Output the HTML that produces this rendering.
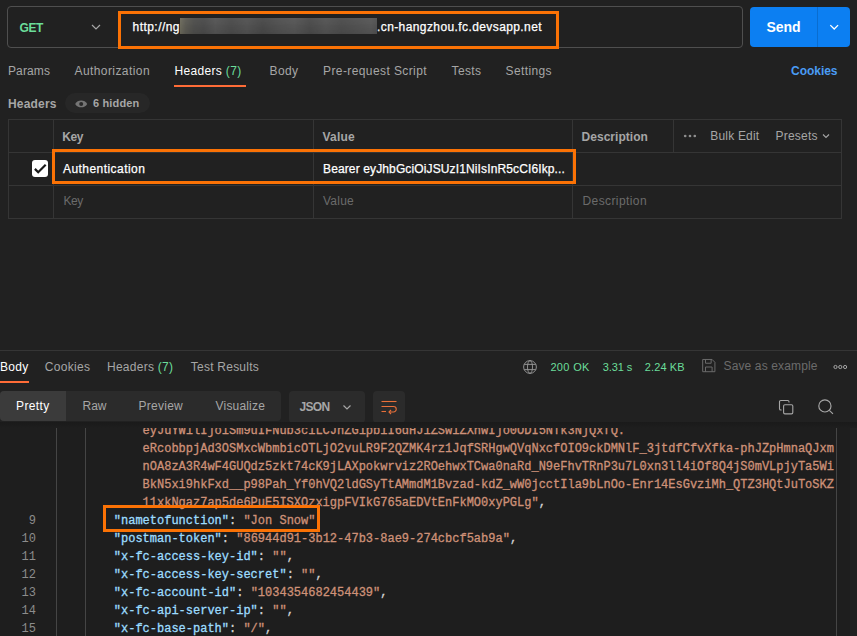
<!DOCTYPE html>
<html lang="en"><head><meta charset="utf-8"><title>Postman</title>
<style>
html,body{margin:0;padding:0}
body{width:857px;height:636px;overflow:hidden;background:#212121;position:relative;font-family:"Liberation Sans",sans-serif;}
.a{position:absolute;box-sizing:border-box}
.t{position:absolute;white-space:nowrap;line-height:20px;height:20px;font-family:"Liberation Sans",sans-serif}
svg{position:absolute;overflow:visible}
#urlbar{left:7px;top:6.3px;width:736px;height:41.5px;border:1px solid #4f4f4f;border-radius:4px}
#blur{left:180px;top:17.5px;width:196.5px;height:16.5px;background:linear-gradient(180deg,rgba(255,255,255,.04),rgba(0,0,0,.08)),linear-gradient(90deg,#6d6b5c 0,#5a5952 3%,#4e4e4c 7%,#4a4a4a 12%,#545454 18%,#4b4b4b 26%,#525252 34%,#484848 42%,#505050 50%,#555 58%,#4a4a4a 66%,#535353 74%,#4c4c4c 82%,#515151 90%,#565656 97%,#505050 100%);filter:blur(.5px)}
#sendbtn{left:750px;top:6.7px;width:100px;height:40.3px;background:#0c7ff2;border-radius:4px}
#senddiv{left:817px;top:6.7px;width:1px;height:40.3px;background:#0a6dd0}
#tabul{left:174px;top:85px;width:72px;height:2px;background:#ff6c37}
#pill{left:65px;top:93px;width:85px;height:20px;border-radius:10px;background:#272727}
#table{left:7.5px;top:119px;width:834.5px;height:99.5px;border:1px solid #353535}
.hline{left:8px;width:833px;height:1px;background:#353535}
.vline{top:119px;width:1px;height:99px;background:#353535}
#chk{left:31.6px;top:160.2px;width:16.6px;height:16.6px;background:#fff;border-radius:3px}
#rdiv{left:0;top:350px;width:857px;height:1px;background:#353535}
#bodyul{left:0;top:381px;width:29px;height:2px;background:#ff6c37}
#grp{left:0;top:391px;width:280.5px;height:29.5px;background:#2b2b2b;border-radius:4px}
#grpsel{left:0;top:391px;width:66px;height:29.5px;background:#3b3b3b;border-radius:4px 0 0 4px}
#jsonbtn{left:288.7px;top:391px;width:76.5px;height:31.5px;background:#2b2b2b;border-radius:4px}
#wrapbtn{left:373px;top:391px;width:32px;height:31.5px;background:#2b2b2b;border-radius:4px}
#code{position:absolute;left:0;top:427.5px;width:850px;height:208.5px;overflow:hidden;background:#1e1e1e}
#code .cl,#code .ln{position:absolute;font-family:"Liberation Mono",monospace;font-size:12px;line-height:18px;height:18px;white-space:pre;margin-top:-427.5px}
#code .ln{left:0;width:36px;text-align:right;color:#8c8c8c}
#code .cl{-webkit-text-stroke:0.3px}
.guide{position:absolute;top:0;width:1px;height:209px;background:#454545}
#shadow{left:0;top:422px;width:857px;height:6px;background:linear-gradient(#1a1a1a,#1e1e1e)}
.hl{position:absolute;box-sizing:border-box;border:3.4px solid #fb7205}
#hl1{left:117.9px;top:10.9px;width:441.3px;height:38.1px}
#hl2{left:51.9px;top:148.8px;width:524.4px;height:35.1px}
#hl3{left:102.9px;top:504.8px;width:217.1px;height:27.2px}
#authn,#bearer,#url1,#url2{-webkit-text-stroke:0.25px}

#get{left:19.6px;top:17.5px;color:#6bdd9a;font-weight:700;font-size:12px;letter-spacing:-0.491px}
#url1{left:132.5px;top:17px;color:#ffffff;font-weight:400;font-size:12px;letter-spacing:0.458px}
#url2{left:377px;top:17px;color:#ffffff;font-weight:400;font-size:12px;letter-spacing:0.403px}
#send{left:766.5px;top:16.8px;color:#ffffff;font-weight:700;font-size:14px;letter-spacing:-0.059px}
#params{left:8px;top:60.5px;color:#a6a6a6;font-weight:400;font-size:12px;letter-spacing:0.109px}
#auth{left:74.5px;top:60.5px;color:#a6a6a6;font-weight:400;font-size:12px;letter-spacing:0.419px}
#hdrs{left:174.5px;top:60.5px;color:#ffffff;font-weight:400;font-size:12px;letter-spacing:0.330px}
#body{left:269.5px;top:60.5px;color:#a6a6a6;font-weight:400;font-size:12px;letter-spacing:0.410px}
#prs{left:323px;top:60.5px;color:#a6a6a6;font-weight:400;font-size:12px;letter-spacing:0.405px}
#tests{left:451.5px;top:60.5px;color:#a6a6a6;font-weight:400;font-size:12px;letter-spacing:0.397px}
#settings{left:505.5px;top:60.5px;color:#a6a6a6;font-weight:400;font-size:12px;letter-spacing:0.393px}
#cookies{left:791px;top:60.5px;color:#4a9cf5;font-weight:700;font-size:12px;letter-spacing:-0.027px}
#hlabel{left:8px;top:93.7px;color:#a6a6a6;font-weight:700;font-size:12px;letter-spacing:0.189px}
#hidden{left:93px;top:93px;color:#a6a6a6;font-weight:700;font-size:11px;letter-spacing:0.158px}
#thkey{left:62.3px;top:126.5px;color:#a6a6a6;font-weight:700;font-size:12px;letter-spacing:-0.439px}
#thval{left:322.4px;top:126.5px;color:#a6a6a6;font-weight:700;font-size:12px;letter-spacing:0.248px}
#thdesc{left:581.5px;top:126.5px;color:#a6a6a6;font-weight:700;font-size:12px;letter-spacing:0.044px}
#bulk{left:710.3px;top:125.5px;color:#a6a6a6;font-weight:400;font-size:12px;letter-spacing:0.182px}
#presets{left:775.4px;top:125.5px;color:#a6a6a6;font-weight:400;font-size:12px;letter-spacing:0.245px}
#authn{left:63px;top:158.5px;color:#ffffff;font-weight:400;font-size:12px;letter-spacing:0.446px}
#bearer{left:323px;top:158.5px;color:#ffffff;font-weight:400;font-size:12px;letter-spacing:0.128px}
#pkey{left:63.4px;top:190.5px;color:#6b6b6b;font-weight:400;font-size:12px;letter-spacing:-0.362px}
#pval{left:323px;top:190.5px;color:#6b6b6b;font-weight:400;font-size:12px;letter-spacing:0.237px}
#pdesc{left:582.5px;top:190.5px;color:#6b6b6b;font-weight:400;font-size:12px;letter-spacing:0.406px}
#rbody{left:0px;top:356.5px;color:#ffffff;font-weight:400;font-size:12px;letter-spacing:0.335px}
#rcook{left:44.8px;top:356.5px;color:#a6a6a6;font-weight:400;font-size:12px;letter-spacing:0.306px}
#rhdr{left:107px;top:356.5px;color:#a6a6a6;font-weight:400;font-size:12px;letter-spacing:0.266px}
#rtest{left:190.8px;top:356.5px;color:#a6a6a6;font-weight:400;font-size:12px;letter-spacing:0.237px}
#s200{left:550.4px;top:357px;color:#6bdd9a;font-weight:400;font-size:11px;letter-spacing:0.348px}
#stime{left:602.7px;top:357px;color:#6bdd9a;font-weight:400;font-size:11px;letter-spacing:-0.061px}
#ssize{left:644.7px;top:357px;color:#6bdd9a;font-weight:400;font-size:11px;letter-spacing:0.137px}
#save{left:723.5px;top:356px;color:#6b6b6b;font-weight:400;font-size:12px;letter-spacing:0.136px}
#pretty{left:16px;top:395.5px;color:#ffffff;font-weight:400;font-size:12px;letter-spacing:0.393px}
#raw{left:82.6px;top:395.5px;color:#a6a6a6;font-weight:400;font-size:12px;letter-spacing:-0.072px}
#preview{left:138.6px;top:395.5px;color:#a6a6a6;font-weight:400;font-size:12px;letter-spacing:0.245px}
#visual{left:215.6px;top:395.5px;color:#a6a6a6;font-weight:400;font-size:12px;letter-spacing:0.176px}
#json{left:299.4px;top:397px;color:#a6a6a6;font-weight:700;font-size:12px;letter-spacing:-0.647px}
</style></head>
<body>
<div class="a" id="urlbar"></div>
<svg style="left:90px;top:22px" width="12" height="10" viewBox="0 0 12 10"><path d="M2 3 L6 7 L10 3" fill="none" stroke="#a6a6a6" stroke-width="1.2"/></svg>
<div class="a" id="blur"></div>
<div class="a" id="sendbtn"></div><div class="a" id="senddiv"></div>
<svg style="left:828px;top:22px" width="12" height="10" viewBox="0 0 12 10"><path d="M2.3 3.1 L6.2 7 L10.1 3.1" fill="none" stroke="#ffffff" stroke-width="1.3"/></svg>
<div class="a" id="tabul"></div>
<div class="a" id="pill"></div>
<svg style="left:74.8px;top:99.6px" width="12.4" height="7.8" viewBox="0 0 12.4 7.8"><path d="M0.2 3.9 C2.4 -0.6 10 -0.6 12.2 3.9 C10 8.4 2.4 8.4 0.2 3.9 Z" fill="#757575"/><circle cx="6.2" cy="3.9" r="2" fill="#2a2a2a"/></svg>
<div class="a" id="table"></div>
<div class="a hline" style="top:152px"></div><div class="a hline" style="top:185px"></div>
<div class="a vline" style="left:53px"></div><div class="a vline" style="left:313px"></div><div class="a vline" style="left:572px"></div>
<div class="a vline" style="left:673px;height:33px"></div>
<svg style="left:683px;top:133px" width="14" height="6" viewBox="0 0 14 6"><circle cx="2.2" cy="3" r="1.35" fill="#8e8e8e"/><circle cx="7" cy="3" r="1.35" fill="#8e8e8e"/><circle cx="11.8" cy="3" r="1.35" fill="#8e8e8e"/></svg>
<svg style="left:820px;top:131px" width="12" height="10" viewBox="0 0 12 10"><path d="M3 3.5 L6 6.5 L9 3.5" fill="none" stroke="#a6a6a6" stroke-width="1.1"/></svg>
<div class="a" id="chk"></div>
<svg style="left:31.6px;top:160.2px" width="16.6" height="16.6" viewBox="0 0 16.6 16.6"><path d="M2.9 8.9 L6.2 12.2 L13.7 4.7" fill="none" stroke="#1a1a1a" stroke-width="2.2"/></svg>
<div class="a" id="rdiv"></div>
<div class="a" id="bodyul"></div>
<svg style="left:523px;top:360px" width="14" height="14" viewBox="0 0 14 14"><g fill="none" stroke="#9a9a9a" stroke-width="0.9"><circle cx="7" cy="7" r="6.4"/><ellipse cx="7" cy="7" rx="2.5" ry="6.4"/><path d="M1.2 4.4 H12.8 M1.2 9.6 H12.8"/></g></svg>
<svg style="left:702.2px;top:359.4px" width="13.6" height="13.2" viewBox="0 0 14 14"><g fill="none" stroke="#6b6b6b" stroke-width="1.05"><path d="M0.5 0.5 H10.5 L13.5 3.5 V13.5 H0.5 Z"/><path d="M3.5 0.5 V4.5 H9.5 V0.5"/><path d="M3.5 13.5 V8.5 H10.5 V13.5"/></g></svg>
<svg style="left:833px;top:363.8px" width="15" height="6" viewBox="0 0 15 6"><g fill="none" stroke="#a6a6a6" stroke-width="1"><circle cx="2.5" cy="3" r="1.6"/><circle cx="7.3" cy="3" r="1.6"/><circle cx="12.1" cy="3" r="1.6"/></g></svg>
<div class="a" id="grp"></div><div class="a" id="grpsel"></div>
<div class="a" id="jsonbtn"></div><div class="a" id="wrapbtn"></div>
<svg style="left:341px;top:402px" width="12" height="10" viewBox="0 0 12 10"><path d="M2.5 3.5 L6 7 L9.5 3.5" fill="none" stroke="#a6a6a6" stroke-width="1.2"/></svg>
<svg style="left:381px;top:400px" width="16" height="14" viewBox="0 0 16 14"><g fill="none" stroke="#e8703a" stroke-width="1.1"><path d="M0.5 1.5 H15.5"/><path d="M0.5 6.5 H12.5 A2.7 2.7 0 0 1 12.5 12 H8"/><path d="M10 10 L8 12 L10 14"/><path d="M0.5 11.5 H5"/></g></svg>
<svg style="left:779px;top:399.6px" width="15" height="15" viewBox="0 0 15 15"><g fill="none" stroke="#a6a6a6" stroke-width="1.1"><rect x="4.6" y="4.7" width="9.2" height="9.2" rx="1.3"/><path d="M2.6 10 H1.8 A1.3 1.3 0 0 1 0.5 8.7 V1.8 A1.3 1.3 0 0 1 1.8 0.5 H8.7 A1.3 1.3 0 0 1 10 1.8 V2.6"/></g></svg>
<svg style="left:818.2px;top:399.2px" width="16" height="16" viewBox="0 0 16 16"><g fill="none" stroke="#a6a6a6" stroke-width="1.15"><circle cx="6.9" cy="6.9" r="6.1"/><path d="M11.3 11.3 L15 14.8"/></g></svg>
<div class="a" id="shadow"></div>

<div id="code"><div class="guide" style="left:56px"></div><div class="guide" style="left:85px"></div><div class="guide" style="left:836px"></div>
<span class="cl" style="top:422.0px;left:142.6px"><span style="color:#ce9178">eyJuYW1lIjoiSm9uIFNub3ciLCJhZG1pbiI6dHJ1ZSwiZXhwIjo0ODI5NTk3NjQxfQ.</span></span>
<span class="cl" style="top:440.0px;left:142.6px"><span style="color:#ce9178">eRcobbpjAd3OSMxcWbmbicOTLjO2vuLR9F2QZMK4rz1JqfSRHgwQVqNxcfOIO9ckDMNlF_3jtdfCfvXfka-phJZpHmnaQJxm</span></span>
<span class="cl" style="top:458.0px;left:142.6px"><span style="color:#ce9178">nOA8zA3R4wF4GUQdz5zkt74cK9jLAXpokwrviz2ROehwxTCwa0naRd_N9eFhvTRnP3u7L0xn3ll4iOf8Q4jS0mVLpjyTa5Wi</span></span>
<span class="cl" style="top:476.0px;left:142.6px"><span style="color:#ce9178">BkN5xi9hkFxd__p98Pah_Yf0hVQ2ldGSyTtAMmdM1Bvzad-kdZ_wW0jcctIla9bLnOo-Enr14EsGvziMh_QTZ3HQtJuToSKZ</span></span>
<span class="cl" style="top:494.0px;left:142.6px"><span style="color:#ce9178">11xkNgaz7ap5de6PuE5ISXOzxigpFVIkG765aEDVtEnFkMO0xyPGLg"</span><span style="color:#d4d4d4">,</span></span>
<span class="ln" style="top:512.0px">9</span>
<span class="cl" style="top:512.0px;left:113.8px"><span style="color:#9cdcfe">"nametofunction"</span><span style="color:#d4d4d4">: </span><span style="color:#ce9178">"Jon Snow"</span></span>
<span class="ln" style="top:530.0px">10</span>
<span class="cl" style="top:530.0px;left:113.8px"><span style="color:#9cdcfe">"postman-token"</span><span style="color:#d4d4d4">: </span><span style="color:#ce9178">"86944d91-3b12-47b3-8ae9-274cbcf5ab9a"</span><span style="color:#d4d4d4">,</span></span>
<span class="ln" style="top:548.0px">11</span>
<span class="cl" style="top:548.0px;left:113.8px"><span style="color:#9cdcfe">"x-fc-access-key-id"</span><span style="color:#d4d4d4">: </span><span style="color:#ce9178">""</span><span style="color:#d4d4d4">,</span></span>
<span class="ln" style="top:566.0px">12</span>
<span class="cl" style="top:566.0px;left:113.8px"><span style="color:#9cdcfe">"x-fc-access-key-secret"</span><span style="color:#d4d4d4">: </span><span style="color:#ce9178">""</span><span style="color:#d4d4d4">,</span></span>
<span class="ln" style="top:584.0px">13</span>
<span class="cl" style="top:584.0px;left:113.8px"><span style="color:#9cdcfe">"x-fc-account-id"</span><span style="color:#d4d4d4">: </span><span style="color:#ce9178">"1034354682454439"</span><span style="color:#d4d4d4">,</span></span>
<span class="ln" style="top:602.0px">14</span>
<span class="cl" style="top:602.0px;left:113.8px"><span style="color:#9cdcfe">"x-fc-api-server-ip"</span><span style="color:#d4d4d4">: </span><span style="color:#ce9178">""</span><span style="color:#d4d4d4">,</span></span>
<span class="ln" style="top:620.0px">15</span>
<span class="cl" style="top:620.0px;left:113.8px"><span style="color:#9cdcfe">"x-fc-base-path"</span><span style="color:#d4d4d4">: </span><span style="color:#ce9178">"/"</span><span style="color:#d4d4d4">,</span></span>
</div>
<div id="codeover"></div>
<span class="t" id="get">GET</span>
<span class="t" id="url1">http://ng</span>
<span class="t" id="url2">.cn-hangzhou.fc.devsapp.net</span>
<span class="t" id="send">Send</span>
<span class="t" id="params">Params</span>
<span class="t" id="auth">Authorization</span>
<span class="t" id="hdrs">Headers <span style="color:#6bdd9a">(7)</span></span>
<span class="t" id="body">Body</span>
<span class="t" id="prs">Pre-request Script</span>
<span class="t" id="tests">Tests</span>
<span class="t" id="settings">Settings</span>
<span class="t" id="cookies">Cookies</span>
<span class="t" id="hlabel">Headers</span>
<span class="t" id="hidden">6 hidden</span>
<span class="t" id="thkey">Key</span>
<span class="t" id="thval">Value</span>
<span class="t" id="thdesc">Description</span>
<span class="t" id="bulk">Bulk Edit</span>
<span class="t" id="presets">Presets</span>
<span class="t" id="authn">Authentication</span>
<span class="t" id="bearer">Bearer eyJhbGciOiJSUzI1NiIsInR5cCI6Ikp...</span>
<span class="t" id="pkey">Key</span>
<span class="t" id="pval">Value</span>
<span class="t" id="pdesc">Description</span>
<span class="t" id="rbody">Body</span>
<span class="t" id="rcook">Cookies</span>
<span class="t" id="rhdr">Headers <span style="color:#6bdd9a">(7)</span></span>
<span class="t" id="rtest">Test Results</span>
<span class="t" id="s200">200 OK</span>
<span class="t" id="stime">3.31 s</span>
<span class="t" id="ssize">2.24 KB</span>
<span class="t" id="save">Save as example</span>
<span class="t" id="pretty">Pretty</span>
<span class="t" id="raw">Raw</span>
<span class="t" id="preview">Preview</span>
<span class="t" id="visual">Visualize</span>
<span class="t" id="json">JSON</span>
<div id="hl1" class="hl"></div><div id="hl2" class="hl"></div><div id="hl3" class="hl"></div>
</body></html>
